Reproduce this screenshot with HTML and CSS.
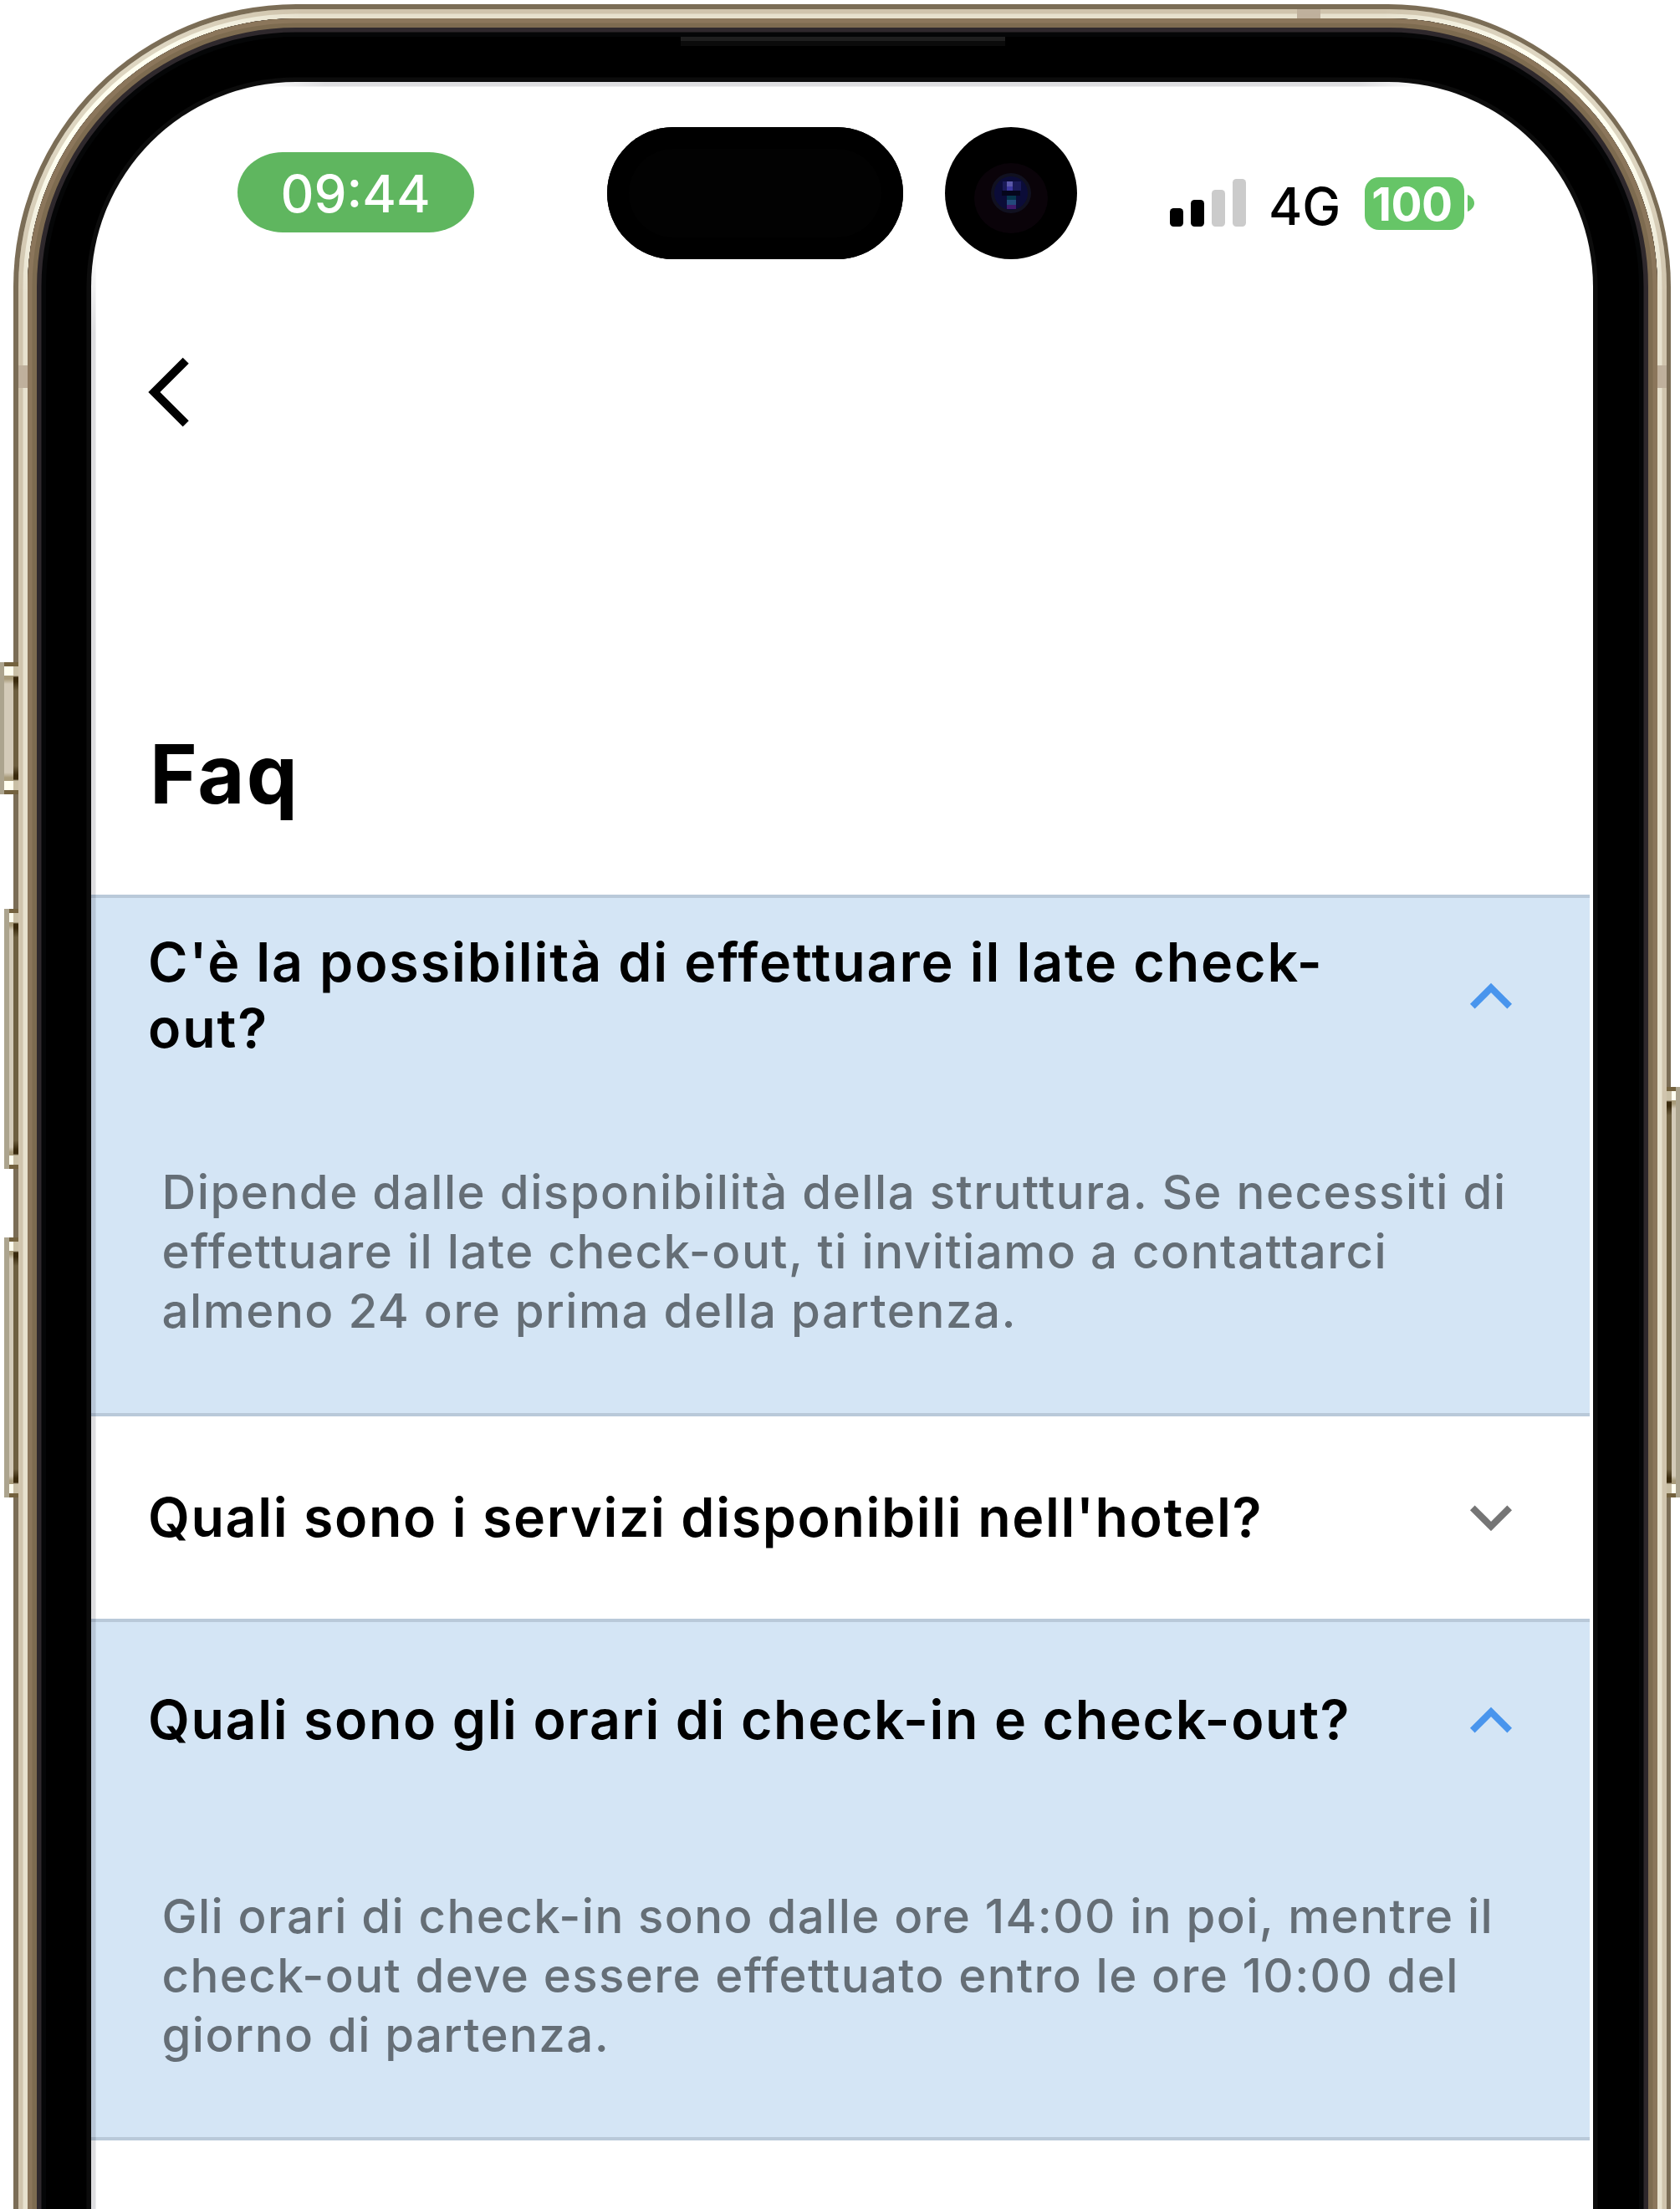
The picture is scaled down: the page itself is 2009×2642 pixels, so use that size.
FILE: index.html
```
<!DOCTYPE html>
<html lang="it">
<head>
<meta charset="utf-8">
<title>Faq</title>
<link rel="stylesheet" href="styles.css">
</head>
<body>
<div class="stage">
  <div class="phone">
    <div class="rim">
      <div class="bezel">
        <div class="speaker"></div>
        <main class="screen">
          <header class="status">
            <div class="time">09:44</div>
            <div class="island"></div>
            <div class="camera">
              <svg class="lens" viewBox="0 0 100 100">
                <ellipse cx="50" cy="56" rx="44" ry="42" fill="#0a0309"/>
                <circle cx="50" cy="50" r="24" fill="#111120"/>
                <circle cx="50" cy="50" r="20" fill="#0b0c38"/>
                <rect x="40" y="36" width="22" height="11" fill="#1a1a58"/>
                <rect x="45" y="36" width="7" height="6" fill="#5a57a8"/>
                <rect x="45" y="42" width="7" height="5" fill="#3d38a0"/>
                <rect x="39" y="47" width="22" height="6" fill="#05061c"/>
                <rect x="45" y="53" width="11" height="5" fill="#06354c"/>
                <rect x="45" y="58" width="11" height="6" fill="#234a7c"/>
                <rect x="45" y="64" width="11" height="5" fill="#3f1a6a"/>
              </svg>
            </div>
            <div class="signal"><i class="bar b1"></i><i class="bar b2"></i><i class="bar b3"></i><i class="bar b4"></i></div>
            <div class="network">4G</div>
            <div class="battery">100</div>
            <svg class="nub" viewBox="0 0 8 20"><path d="M0 0C5 2 8 6 8 10S5 18 0 20Z" fill="#66c567"/></svg>
          </header>
          <nav class="nav">
            <svg class="back" viewBox="0 0 50 84"><path d="M45.2 4.2 7.4 42 45.2 79.8" fill="none" stroke="#000" stroke-width="10"/></svg>
          </nav>
          <h1 class="title">Faq</h1>
          <section class="item open">
            <div class="head">
              <h2 class="question wide">C'è la possibilità di effettuare il late check-<br>out?</h2>
              <svg class="chevron" viewBox="0 0 52 32"><path d="M3.8 28.7 26 6.5 48.2 28.7" fill="none" stroke="#4995ed" stroke-width="8"/></svg>
            </div>
            <p class="answer wide">Dipende dalle disponibilità della struttura. Se necessiti di<br>effettuare il late check-out, ti invitiamo a contattarci<br>almeno 24 ore prima della partenza.</p>
          </section>
          <section class="item">
            <div class="head">
              <h2 class="question">Quali sono i servizi disponibili nell'hotel?</h2>
              <svg class="chevron" viewBox="0 0 52 32"><path d="M3.8 4.3 26 26.5 48.2 4.3" fill="none" stroke="#757575" stroke-width="8"/></svg>
            </div>
          </section>
          <section class="item open">
            <div class="head">
              <h2 class="question">Quali sono gli orari di check-in e check-out?</h2>
              <svg class="chevron" viewBox="0 0 52 32"><path d="M3.8 28.7 26 6.5 48.2 28.7" fill="none" stroke="#4995ed" stroke-width="8"/></svg>
            </div>
            <p class="answer">Gli orari di check-in sono dalle ore 14:00 in poi, mentre il<br>check-out deve essere effettuato entro le ore 10:00 del<br>giorno di partenza.</p>
          </section>
        </main>
      </div>
    </div>
  </div>
  <i class="seam seam-top"></i>
  <i class="seam seam-left"></i>
  <i class="seam seam-right"></i>
  <i class="key mute"></i>
  <i class="key volume-up"></i>
  <i class="key volume-down"></i>
  <i class="key power"></i>
</div>
</body>
</html>
```
FILE: styles.css
```
* { box-sizing: border-box; }
body { margin: 0; background: #fff; font-family: Inter, "Liberation Sans", sans-serif; }
.stage { position: relative; width: 2009px; height: 2642px; padding: 5px 11px 0 16px; overflow: hidden; }

/* metal frame, from the outside in */
.phone { height: 2900px; padding: 5.5px; border-radius: 338px 338px 0 0; background: #7b6d56; }
.rim {
  height: 100%; padding: 11px; border-radius: 332px 332px 0 0;
  box-shadow: inset 0 0 0 5.5px rgba(176, 158, 128, .42);
  background:
    radial-gradient(circle at 95px 95px, #fffff0 90px, rgba(255, 255, 240, 0) 260px),
    radial-gradient(circle at calc(100% - 95px) 95px, #fffff0 90px, rgba(255, 255, 240, 0) 260px),
    #e7e1ce;
}
.bezel {
  height: 100%; padding: 76.5px; border-radius: 321.5px 321.5px 0 0; background: #000;
  box-shadow: inset 0 0 0 5.5px #8b765b, inset 0 0 0 11px #7d6b50, inset 0 0 0 16.5px #2e282c, inset 0 0 0 22px #050607;
  position: relative;
}
.speaker { position: absolute; left: 781px; top: 22px; width: 388px; height: 11px; background: linear-gradient(#1f1f1f 50%, #0b0b0b 50%); }
.screen {
  position: relative; height: 100%; border-radius: 245px 245px 0 0; background: #fff; overflow: hidden;
  box-shadow: 0 0 0 5.5px #0c0c0c;
}
/* soft inner edge along the straight parts of the top and left sides */
.screen::after {
  content: ""; position: absolute; inset: 0;
  background:
    linear-gradient(rgba(0, 0, 20, 0) 200px, rgba(0, 0, 20, .13) 300px) 0 0 / 5.5px 100% no-repeat,
    linear-gradient(90deg, rgba(0, 0, 20, 0) 200px, rgba(0, 0, 20, .13) 280px calc(100% - 280px), rgba(0, 0, 20, 0) calc(100% - 200px)) 0 0 / 100% 5.5px no-repeat;
}

/* status bar */
.status { display: flex; height: 267px; padding-top: 54px; }
.time {
  width: 283px; height: 96px; margin: 30px 0 0 174.5px; border-radius: 54px / 48px; background: #5fb65f; color: #fff;
  font-size: 62px; font-weight: 500; line-height: 99px; text-align: center;
}
.island { width: 354px; height: 158px; margin-left: 159px; border-radius: 79px; background: #020202; box-shadow: inset 0 0 0 26px #000; }
.camera { display: flex; width: 158px; height: 158px; margin-left: 50px; border-radius: 50%; background: #000; align-items: center; justify-content: center; }
.lens { width: 100px; height: 100px; }
.signal { display: flex; gap: 9.5px; height: 57px; margin: 62px 0 0 111.5px; align-items: flex-end; }
.bar { width: 15.5px; border-radius: 4.5px; background: #000; }
.b1 { height: 22px; }
.b2 { height: 32px; }
.b3 { height: 44px; background: #cbcbcb; }
.b4 { height: 57px; background: #cbcbcb; }
.network { width: 83px; margin: 57px 0 0 27.5px; font-size: 61.5px; font-weight: 500; line-height: 76px; }
.battery {
  width: 119px; height: 63px; margin: 59.5px 0 0 32px; padding-right: 6px; border-radius: 17px; background: #66c567; color: #fff;
  font-size: 55px; font-weight: 700; line-height: 64px; letter-spacing: -.5px; text-align: center;
}
.nub { width: 8px; height: 20px; margin: 81px 0 0 4px; }

.nav { height: 200px; padding: 61.5px 0 0 67.5px; }
.back { display: block; width: 50px; height: 84px; }
.title { height: 505px; margin: 0; padding: 301px 0 0 70px; font-size: 97px; font-weight: 700; line-height: 120px; letter-spacing: 2px; }

/* accordion */
.item { width: 1792px; }
.open { border: solid #b9c9d9; border-width: 4px 0; background: #d4e5f5; }
.head { display: flex; height: 234px; padding: 0 92px 0 68px; align-items: center; justify-content: space-between; }
.item:not(.open) .head { height: 242px; }
.question { margin: 0; color: #000; font-size: 64.5px; font-weight: 600; line-height: 79px; letter-spacing: 1.6px; white-space: nowrap; }
.question.wide { letter-spacing: 1.88px; }
.chevron { flex: none; width: 52px; height: 32px; }
.answer { margin: 0; padding: 82px 0 86.4px 84.5px; color: #656e76; font-size: 56.4px; font-weight: 450; line-height: 71.2px; letter-spacing: 1.38px; white-space: nowrap; }
.answer.wide { letter-spacing: 1.5px; }

/* antenna seams and side keys sit over the frame */
.seam { position: absolute; background: #bfb09c; }
.seam-top { left: 1551px; top: 11px; width: 28px; height: 11px; }
.seam-left { left: 22px; top: 437px; width: 11px; height: 27px; }
.seam-right { left: 1982px; top: 437px; width: 11px; height: 27px; }
.key {
  position: absolute; left: 5px; width: 17px;
  background:
    linear-gradient(#74623f 5px, #fffff0 5px 16px, #a89b7a 16px 20px, #d3cab8 26px calc(100% - 26px), #a89b7a calc(100% - 20px) calc(100% - 16px), #fffff0 calc(100% - 16px) calc(100% - 5px), #74623f calc(100% - 5px)) 6px 0 / 5px 100% no-repeat,
    linear-gradient(#74623f 5px, #c9bfa5 5px 16px, #3a2a0d 18px 23px, #6e5f40 34px calc(100% - 34px), #3a2a0d calc(100% - 23px) calc(100% - 18px), #c9bfa5 calc(100% - 16px) calc(100% - 5px), #74623f calc(100% - 5px)) 11px 0 / 6px 100% no-repeat,
    #aca48e;
}
.mute { left: 0; top: 792px; width: 22px; height: 158px; background-position: 5px 0, 16px 0; background-size: 11px 100%, 6px 100%; }
.volume-up { top: 1087px; height: 311px; }
.volume-down { top: 1480px; height: 311px; }
.power { left: 1993px; top: 1300px; height: 491px; transform: scaleX(-1); }
```
